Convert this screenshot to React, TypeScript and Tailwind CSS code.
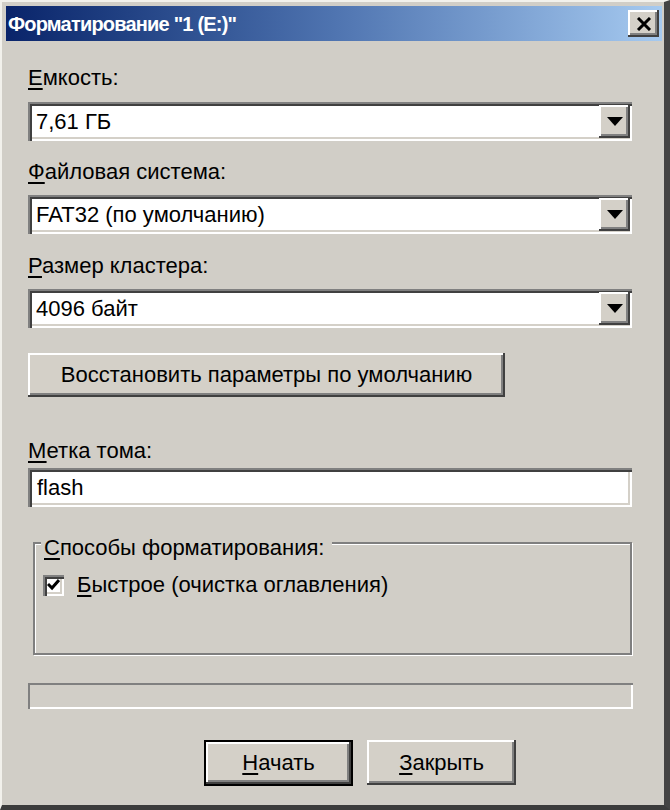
const raised =
  "bg-[#d4d0c8] shadow-[inset_-2px_-2px_0_#404040,inset_2px_2px_0_#ffffff,inset_-4px_-4px_0_#808080]";
const sunken =
  "bg-white shadow-[inset_2px_2px_0_#808080,inset_4px_4px_0_#404040,inset_-2px_-2px_0_#ffffff,inset_-4px_-4px_0_#d4d0c8]";

function Acc({ k, rest }: { k: string; rest: string }) {
  return (
    <span>
      <span className="underline underline-offset-[3px] decoration-2">{k}</span>
      {rest}
    </span>
  );
}

function Combo({ value }: { value: string }) {
  return (
    <div className={`${sunken} h-[39px] w-[604px] flex items-stretch p-[3px] pr-[2px]`}>
      <div className="flex-1 flex items-center pl-[5px] pt-[1px]">{value}</div>
      <div className={`${raised} w-[31px] flex items-center justify-center`}>
        <svg width="16" height="9" viewBox="0 0 16 9">
          <path d="M0 0 H16 L8 9 Z" fill="#000" />
        </svg>
      </div>
    </div>
  );
}

export default function App() {
  return (
    <div className="w-[670px] h-[810px] bg-[#d1cec7] border-l-2 border-t-2 border-l-[#f2f1ec] border-t-[#f2f1ec] border-r-[6px] border-b-[5px] border-r-[#444444] border-b-[#3c3c3c] pl-[4px] pt-[4px] pr-[2px] font-['Liberation_Sans',Arial,sans-serif] text-[22px] leading-6 text-black flex flex-col">
      {/* Title bar */}
      <div className="h-[35px] bg-gradient-to-r from-[#0a246a] via-[#4f74b0] to-[#a6caf0] flex items-center justify-between pl-[2px] pr-[3px]">
        <span className="text-white font-bold text-[20px] tracking-[-0.8px]">Форматирование "1 (E:)"</span>
        <div className={`${raised} w-[31px] h-[27px] flex items-center justify-center`}>
          <svg width="16" height="14" viewBox="0 0 16 14">
            <path d="M2 1 L14 13 M14 1 L2 13" stroke="#000" strokeWidth="3" />
          </svg>
        </div>
      </div>

      {/* Body */}
      <div className="flex flex-col pl-[22px] pr-[30px] pt-[25px]">
        <div className="h-6">
          <Acc k="Е" rest="мкость:" />
        </div>
        <div className="mt-[12px]">
          <Combo value="7,61 ГБ" />
        </div>

        <div className="h-6 mt-[19px]">
          <Acc k="Ф" rest="айловая система:" />
        </div>
        <div className="mt-[11px]">
          <Combo value="FAT32 (по умолчанию)" />
        </div>

        <div className="h-6 mt-[20px]">
          <Acc k="Р" rest="азмер кластера:" />
        </div>
        <div className="mt-[11px]">
          <Combo value="4096 байт" />
        </div>

        <div className={`${raised} mt-[25px] h-[44px] w-[477px] flex items-center justify-center`}>
          Восстановить параметры по умолчанию
        </div>

        <div className="h-6 mt-[42px]">
          <Acc k="М" rest="етка тома:" />
        </div>
        <div className={`${sunken} mt-[5px] h-[39px] w-[604px] flex items-center pl-[9px] pt-[1px]`}>
          flash
        </div>

        {/* Group box */}
        <div className="relative mt-[35px] ml-[5px] h-[113px] w-[599px] border-2 border-[#7f7f7f] shadow-[1px_1px_0_#ffffff,inset_1px_1px_0_#ffffff]">
          <div className="absolute left-[6px] top-[-8px] bg-[#d1cec7] pl-[3px] pr-[8px]">
            <Acc k="С" rest="пособы форматирования:" />
          </div>
          <div className="flex items-center gap-[13px] mt-[29px] ml-[8px]">
            <div className={`${sunken} w-[21px] h-[21px] flex items-center justify-center`}>
              <svg width="13" height="12" viewBox="0 0 13 12">
                <path d="M1 5 L5 9 L12 1" stroke="#000" strokeWidth="3" fill="none" />
              </svg>
            </div>
            <Acc k="Б" rest="ыстрое (очистка оглавления)" />
          </div>
        </div>

        {/* Progress */}
        <div className="mt-[28px] h-[26px] w-[605px] shadow-[inset_2px_2px_0_#808080,inset_-2px_-2px_0_#ffffff]" />

        {/* Buttons */}
        <div className="mt-[31px] flex gap-[14px] ml-[176px]">
          <div className="w-[149px] h-[46px] border-2 border-black">
            <div className={`${raised} h-full flex items-center justify-center`}>
              <Acc k="Н" rest="ачать" />
            </div>
          </div>
          <div className={`${raised} w-[149px] h-[45px] flex items-center justify-center`}>
            <Acc k="З" rest="акрыть" />
          </div>
        </div>
      </div>
    </div>
  );
}
